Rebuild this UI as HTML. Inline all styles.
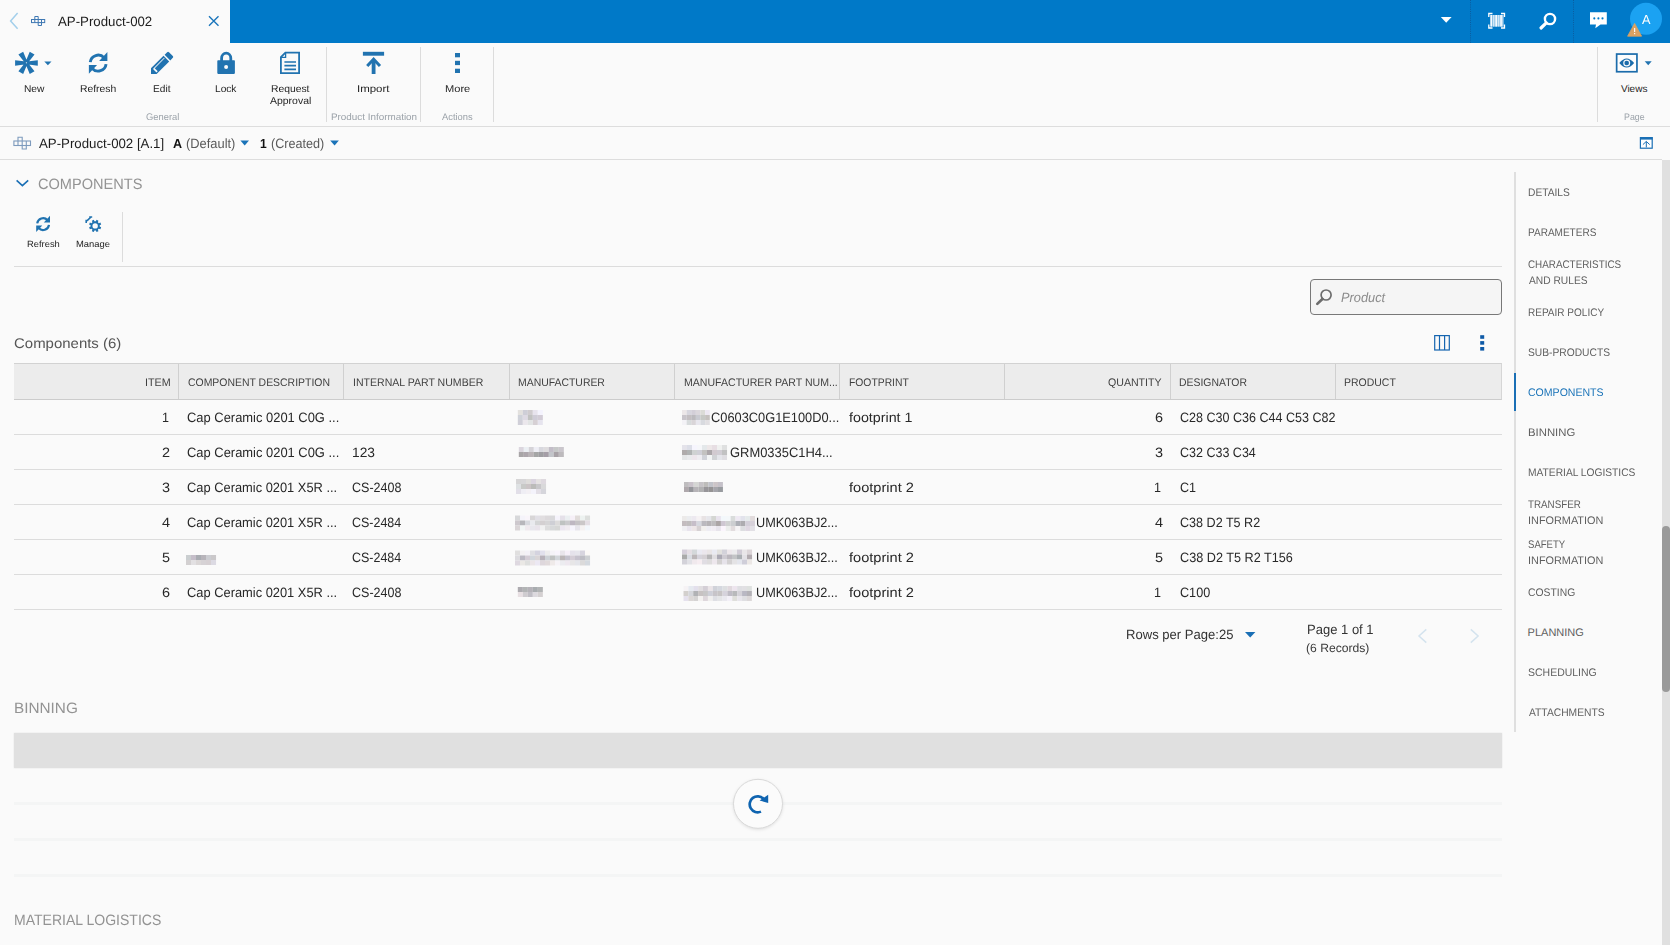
<!DOCTYPE html>
<html><head><meta charset="utf-8"><title>AP-Product-002</title>
<style>
*{box-sizing:border-box;margin:0;padding:0}
html,body{width:1670px;height:945px;overflow:hidden;background:#fafafa;font-family:"Liberation Sans",sans-serif;color:#333}
.abs{position:absolute}
.t{position:absolute;white-space:nowrap;line-height:1;transform-origin:0 0;text-rendering:geometricPrecision}
.hl{position:absolute;height:1px;background:#dcdcdc}
.vl{position:absolute;width:1px;background:#dcdcdc}
svg{position:absolute;overflow:visible}
</style></head><body>
<div class="abs" style="left:230px;top:0;width:1440px;height:43px;background:#0079c8"></div>
<div class="vl" style="left:326px;top:47px;height:75px"></div>
<div class="vl" style="left:420px;top:47px;height:75px"></div>
<div class="vl" style="left:493px;top:47px;height:75px"></div>
<div class="vl" style="left:1597px;top:47px;height:75px"></div>
<div class="hl" style="left:0;top:126px;width:1670px;background:#dddddd"></div>
<div class="hl" style="left:0;top:159px;width:1662px;background:#dddddd"></div>
<div class="vl" style="left:122px;top:212px;height:50px"></div>
<div class="hl" style="left:14px;top:266px;width:1488px"></div>
<div class="abs" style="left:1310px;top:279px;width:192px;height:36px;border:1px solid #787878;border-radius:4px;background:#f5f5f5"></div>
<div class="abs" style="left:14px;top:363px;width:1488px;height:37px;background:#ececec;border-top:1px solid #d2d2d2;border-bottom:1px solid #cccccc;border-right:1px solid #d6d6d6"></div>
<div class="vl" style="left:178px;top:364px;height:35px;background:#d0d0d0"></div>
<div class="vl" style="left:343px;top:364px;height:35px;background:#d0d0d0"></div>
<div class="vl" style="left:509px;top:364px;height:35px;background:#d0d0d0"></div>
<div class="vl" style="left:674px;top:364px;height:35px;background:#d0d0d0"></div>
<div class="vl" style="left:839px;top:364px;height:35px;background:#d0d0d0"></div>
<div class="vl" style="left:1004px;top:364px;height:35px;background:#d0d0d0"></div>
<div class="vl" style="left:1170px;top:364px;height:35px;background:#d0d0d0"></div>
<div class="vl" style="left:1335px;top:364px;height:35px;background:#d0d0d0"></div>
<div class="hl" style="left:14px;top:434px;width:1488px;background:#dcdcdc"></div>
<div class="hl" style="left:14px;top:469px;width:1488px;background:#dcdcdc"></div>
<div class="hl" style="left:14px;top:504px;width:1488px;background:#dcdcdc"></div>
<div class="hl" style="left:14px;top:539px;width:1488px;background:#dcdcdc"></div>
<div class="hl" style="left:14px;top:574px;width:1488px;background:#dcdcdc"></div>
<div class="hl" style="left:14px;top:609px;width:1488px;background:#dcdcdc"></div>
<div class="abs" style="left:14px;top:733px;width:1488px;height:35px;background:#e0e0e0;box-shadow:0 0 1.5px #e0e0e0"></div>
<div class="abs" style="left:14px;top:802px;width:1488px;height:3px;background:#f4f5f5"></div>
<div class="abs" style="left:14px;top:838px;width:1488px;height:3px;background:#f4f5f5"></div>
<div class="abs" style="left:14px;top:874px;width:1488px;height:3px;background:#f4f5f5"></div>
<div class="abs" style="left:1514px;top:172px;width:2px;height:560px;background:#dfdfdf"></div>
<div class="abs" style="left:1514px;top:373px;width:2px;height:38px;background:#1a6fb5"></div>
<div class="abs" style="left:1662px;top:160px;width:8px;height:785px;background:#e0e0e0"></div>
<div class="abs" style="left:1662px;top:525.5px;width:8px;height:166.5px;background:#9a9a9a;border-radius:4px"></div>
<svg style="left:0;top:0;filter:blur(.6px)" width="1670" height="945"><rect x="517.80" y="410.0" width="5.05" height="5" fill="rgb(227,225,222)"/><rect x="522.80" y="410.0" width="5.05" height="5" fill="rgb(206,206,215)"/><rect x="527.80" y="410.0" width="5.05" height="5" fill="rgb(207,203,206)"/><rect x="532.80" y="410.0" width="5.05" height="5" fill="rgb(231,227,237)"/><rect x="537.80" y="410.0" width="5.05" height="5" fill="rgb(244,243,253)"/><rect x="517.80" y="415.0" width="5.05" height="5" fill="rgb(207,210,217)"/><rect x="522.80" y="415.0" width="5.05" height="5" fill="rgb(222,218,228)"/><rect x="527.80" y="415.0" width="5.05" height="5" fill="rgb(193,194,193)"/><rect x="532.80" y="415.0" width="5.05" height="5" fill="rgb(207,204,215)"/><rect x="537.80" y="415.0" width="5.05" height="5" fill="rgb(210,204,214)"/><rect x="517.80" y="420.0" width="5.05" height="5" fill="rgb(208,207,216)"/><rect x="522.80" y="420.0" width="5.05" height="5" fill="rgb(235,231,236)"/><rect x="527.80" y="420.0" width="5.05" height="5" fill="rgb(226,228,228)"/><rect x="532.80" y="420.0" width="5.05" height="5" fill="rgb(214,208,212)"/><rect x="537.80" y="420.0" width="5.05" height="5" fill="rgb(230,228,238)"/><rect x="518.80" y="447.0" width="5.05" height="5" fill="rgb(219,214,222)"/><rect x="523.80" y="447.0" width="5.05" height="5" fill="rgb(235,239,243)"/><rect x="528.80" y="447.0" width="5.05" height="5" fill="rgb(213,211,216)"/><rect x="533.80" y="447.0" width="5.05" height="5" fill="rgb(238,238,245)"/><rect x="538.80" y="447.0" width="5.05" height="5" fill="rgb(216,216,222)"/><rect x="543.80" y="447.0" width="5.05" height="5" fill="rgb(222,220,222)"/><rect x="548.80" y="447.0" width="5.05" height="5" fill="rgb(194,189,199)"/><rect x="553.80" y="447.0" width="5.05" height="5" fill="rgb(198,200,200)"/><rect x="558.80" y="447.0" width="5.05" height="5" fill="rgb(202,198,204)"/><rect x="518.80" y="452.0" width="5.05" height="5" fill="rgb(168,165,167)"/><rect x="523.80" y="452.0" width="5.05" height="5" fill="rgb(173,166,172)"/><rect x="528.80" y="452.0" width="5.05" height="5" fill="rgb(185,179,182)"/><rect x="533.80" y="452.0" width="5.05" height="5" fill="rgb(165,166,166)"/><rect x="538.80" y="452.0" width="5.05" height="5" fill="rgb(159,158,162)"/><rect x="543.80" y="452.0" width="5.05" height="5" fill="rgb(165,158,167)"/><rect x="548.80" y="452.0" width="5.05" height="5" fill="rgb(195,197,202)"/><rect x="553.80" y="452.0" width="5.05" height="5" fill="rgb(168,162,167)"/><rect x="558.80" y="452.0" width="5.05" height="5" fill="rgb(189,186,189)"/><rect x="516.00" y="479.0" width="5.05" height="5" fill="rgb(214,213,214)"/><rect x="521.00" y="479.0" width="5.05" height="5" fill="rgb(215,214,216)"/><rect x="526.00" y="479.0" width="5.05" height="5" fill="rgb(222,220,218)"/><rect x="531.00" y="479.0" width="5.05" height="5" fill="rgb(218,212,223)"/><rect x="536.00" y="479.0" width="5.05" height="5" fill="rgb(229,226,226)"/><rect x="541.00" y="479.0" width="5.05" height="5" fill="rgb(222,217,223)"/><rect x="516.00" y="484.0" width="5.05" height="5" fill="rgb(222,225,227)"/><rect x="521.00" y="484.0" width="5.05" height="5" fill="rgb(200,201,199)"/><rect x="526.00" y="484.0" width="5.05" height="5" fill="rgb(203,196,198)"/><rect x="531.00" y="484.0" width="5.05" height="5" fill="rgb(187,187,185)"/><rect x="536.00" y="484.0" width="5.05" height="5" fill="rgb(200,199,202)"/><rect x="541.00" y="484.0" width="5.05" height="5" fill="rgb(217,217,218)"/><rect x="516.00" y="489.0" width="5.05" height="5" fill="rgb(226,223,232)"/><rect x="521.00" y="489.0" width="5.05" height="5" fill="rgb(239,238,244)"/><rect x="526.00" y="489.0" width="5.05" height="5" fill="rgb(243,240,244)"/><rect x="531.00" y="489.0" width="5.05" height="5" fill="rgb(244,243,251)"/><rect x="536.00" y="489.0" width="5.05" height="5" fill="rgb(227,223,230)"/><rect x="541.00" y="489.0" width="5.05" height="5" fill="rgb(213,213,219)"/><rect x="515.00" y="515.5" width="5.05" height="5" fill="rgb(215,216,218)"/><rect x="520.00" y="515.5" width="5.05" height="5" fill="rgb(245,244,250)"/><rect x="525.00" y="515.5" width="5.05" height="5" fill="rgb(249,245,250)"/><rect x="530.00" y="515.5" width="5.05" height="5" fill="rgb(216,214,215)"/><rect x="535.00" y="515.5" width="5.05" height="5" fill="rgb(225,223,229)"/><rect x="540.00" y="515.5" width="5.05" height="5" fill="rgb(225,222,224)"/><rect x="545.00" y="515.5" width="5.05" height="5" fill="rgb(220,217,219)"/><rect x="550.00" y="515.5" width="5.05" height="5" fill="rgb(217,217,219)"/><rect x="555.00" y="515.5" width="5.05" height="5" fill="rgb(245,243,251)"/><rect x="560.00" y="515.5" width="5.05" height="5" fill="rgb(229,225,233)"/><rect x="565.00" y="515.5" width="5.05" height="5" fill="rgb(235,239,241)"/><rect x="570.00" y="515.5" width="5.05" height="5" fill="rgb(246,240,247)"/><rect x="575.00" y="515.5" width="5.05" height="5" fill="rgb(225,220,218)"/><rect x="580.00" y="515.5" width="5.05" height="5" fill="rgb(237,242,240)"/><rect x="585.00" y="515.5" width="5.05" height="5" fill="rgb(221,223,221)"/><rect x="515.00" y="520.5" width="5.05" height="5" fill="rgb(205,200,205)"/><rect x="520.00" y="520.5" width="5.05" height="5" fill="rgb(183,183,187)"/><rect x="525.00" y="520.5" width="5.05" height="5" fill="rgb(215,217,222)"/><rect x="530.00" y="520.5" width="5.05" height="5" fill="rgb(233,234,238)"/><rect x="535.00" y="520.5" width="5.05" height="5" fill="rgb(212,213,214)"/><rect x="540.00" y="520.5" width="5.05" height="5" fill="rgb(212,208,209)"/><rect x="545.00" y="520.5" width="5.05" height="5" fill="rgb(214,213,214)"/><rect x="550.00" y="520.5" width="5.05" height="5" fill="rgb(206,207,213)"/><rect x="555.00" y="520.5" width="5.05" height="5" fill="rgb(220,219,219)"/><rect x="560.00" y="520.5" width="5.05" height="5" fill="rgb(191,195,193)"/><rect x="565.00" y="520.5" width="5.05" height="5" fill="rgb(202,202,204)"/><rect x="570.00" y="520.5" width="5.05" height="5" fill="rgb(190,183,194)"/><rect x="575.00" y="520.5" width="5.05" height="5" fill="rgb(197,194,198)"/><rect x="580.00" y="520.5" width="5.05" height="5" fill="rgb(203,199,200)"/><rect x="585.00" y="520.5" width="5.05" height="5" fill="rgb(228,222,228)"/><rect x="515.00" y="525.5" width="5.05" height="5" fill="rgb(218,213,215)"/><rect x="520.00" y="525.5" width="5.05" height="5" fill="rgb(242,246,245)"/><rect x="525.00" y="525.5" width="5.05" height="5" fill="rgb(239,234,238)"/><rect x="530.00" y="525.5" width="5.05" height="5" fill="rgb(232,231,237)"/><rect x="535.00" y="525.5" width="5.05" height="5" fill="rgb(233,228,235)"/><rect x="540.00" y="525.5" width="5.05" height="5" fill="rgb(241,241,241)"/><rect x="545.00" y="525.5" width="5.05" height="5" fill="rgb(221,221,221)"/><rect x="550.00" y="525.5" width="5.05" height="5" fill="rgb(215,217,218)"/><rect x="555.00" y="525.5" width="5.05" height="5" fill="rgb(214,215,214)"/><rect x="560.00" y="525.5" width="5.05" height="5" fill="rgb(236,231,240)"/><rect x="565.00" y="525.5" width="5.05" height="5" fill="rgb(240,236,240)"/><rect x="570.00" y="525.5" width="5.05" height="5" fill="rgb(246,244,253)"/><rect x="575.00" y="525.5" width="5.05" height="5" fill="rgb(231,229,236)"/><rect x="580.00" y="525.5" width="5.05" height="5" fill="rgb(245,242,242)"/><rect x="585.00" y="525.5" width="5.05" height="5" fill="rgb(243,247,252)"/><rect x="515.00" y="550.5" width="5.05" height="5" fill="rgb(224,223,223)"/><rect x="520.00" y="550.5" width="5.05" height="5" fill="rgb(244,241,243)"/><rect x="525.00" y="550.5" width="5.05" height="5" fill="rgb(244,241,247)"/><rect x="530.00" y="550.5" width="5.05" height="5" fill="rgb(223,223,227)"/><rect x="535.00" y="550.5" width="5.05" height="5" fill="rgb(212,211,223)"/><rect x="540.00" y="550.5" width="5.05" height="5" fill="rgb(225,224,236)"/><rect x="545.00" y="550.5" width="5.05" height="5" fill="rgb(237,236,237)"/><rect x="550.00" y="550.5" width="5.05" height="5" fill="rgb(245,243,248)"/><rect x="555.00" y="550.5" width="5.05" height="5" fill="rgb(248,244,252)"/><rect x="560.00" y="550.5" width="5.05" height="5" fill="rgb(233,229,235)"/><rect x="565.00" y="550.5" width="5.05" height="5" fill="rgb(246,239,248)"/><rect x="570.00" y="550.5" width="5.05" height="5" fill="rgb(229,226,235)"/><rect x="575.00" y="550.5" width="5.05" height="5" fill="rgb(230,229,236)"/><rect x="580.00" y="550.5" width="5.05" height="5" fill="rgb(215,212,222)"/><rect x="585.00" y="550.5" width="5.05" height="5" fill="rgb(251,248,246)"/><rect x="515.00" y="555.5" width="5.05" height="5" fill="rgb(220,219,223)"/><rect x="520.00" y="555.5" width="5.05" height="5" fill="rgb(188,185,195)"/><rect x="525.00" y="555.5" width="5.05" height="5" fill="rgb(212,204,213)"/><rect x="530.00" y="555.5" width="5.05" height="5" fill="rgb(209,214,220)"/><rect x="535.00" y="555.5" width="5.05" height="5" fill="rgb(217,213,215)"/><rect x="540.00" y="555.5" width="5.05" height="5" fill="rgb(184,178,186)"/><rect x="545.00" y="555.5" width="5.05" height="5" fill="rgb(205,209,214)"/><rect x="550.00" y="555.5" width="5.05" height="5" fill="rgb(192,194,194)"/><rect x="555.00" y="555.5" width="5.05" height="5" fill="rgb(210,213,218)"/><rect x="560.00" y="555.5" width="5.05" height="5" fill="rgb(188,182,183)"/><rect x="565.00" y="555.5" width="5.05" height="5" fill="rgb(196,193,204)"/><rect x="570.00" y="555.5" width="5.05" height="5" fill="rgb(212,205,214)"/><rect x="575.00" y="555.5" width="5.05" height="5" fill="rgb(198,194,205)"/><rect x="580.00" y="555.5" width="5.05" height="5" fill="rgb(190,189,196)"/><rect x="585.00" y="555.5" width="5.05" height="5" fill="rgb(205,207,210)"/><rect x="515.00" y="560.5" width="5.05" height="5" fill="rgb(222,216,224)"/><rect x="520.00" y="560.5" width="5.05" height="5" fill="rgb(234,232,229)"/><rect x="525.00" y="560.5" width="5.05" height="5" fill="rgb(222,223,222)"/><rect x="530.00" y="560.5" width="5.05" height="5" fill="rgb(235,229,232)"/><rect x="535.00" y="560.5" width="5.05" height="5" fill="rgb(236,232,243)"/><rect x="540.00" y="560.5" width="5.05" height="5" fill="rgb(222,215,220)"/><rect x="545.00" y="560.5" width="5.05" height="5" fill="rgb(225,218,219)"/><rect x="550.00" y="560.5" width="5.05" height="5" fill="rgb(239,234,233)"/><rect x="555.00" y="560.5" width="5.05" height="5" fill="rgb(246,243,247)"/><rect x="560.00" y="560.5" width="5.05" height="5" fill="rgb(236,236,240)"/><rect x="565.00" y="560.5" width="5.05" height="5" fill="rgb(238,232,239)"/><rect x="570.00" y="560.5" width="5.05" height="5" fill="rgb(231,230,231)"/><rect x="575.00" y="560.5" width="5.05" height="5" fill="rgb(228,229,234)"/><rect x="580.00" y="560.5" width="5.05" height="5" fill="rgb(219,218,218)"/><rect x="585.00" y="560.5" width="5.05" height="5" fill="rgb(212,217,223)"/><rect x="517.80" y="587.0" width="5.05" height="5" fill="rgb(173,171,176)"/><rect x="522.80" y="587.0" width="5.05" height="5" fill="rgb(178,180,181)"/><rect x="527.80" y="587.0" width="5.05" height="5" fill="rgb(181,178,184)"/><rect x="532.80" y="587.0" width="5.05" height="5" fill="rgb(168,172,175)"/><rect x="537.80" y="587.0" width="5.05" height="5" fill="rgb(178,180,181)"/><rect x="517.80" y="592.0" width="5.05" height="5" fill="rgb(232,224,227)"/><rect x="522.80" y="592.0" width="5.05" height="5" fill="rgb(207,204,208)"/><rect x="527.80" y="592.0" width="5.05" height="5" fill="rgb(192,190,197)"/><rect x="532.80" y="592.0" width="5.05" height="5" fill="rgb(220,217,222)"/><rect x="537.80" y="592.0" width="5.05" height="5" fill="rgb(212,208,209)"/><rect x="682.00" y="410.0" width="4.67" height="5" fill="rgb(236,231,232)"/><rect x="686.62" y="410.0" width="4.67" height="5" fill="rgb(215,214,222)"/><rect x="691.24" y="410.0" width="4.67" height="5" fill="rgb(211,207,216)"/><rect x="695.86" y="410.0" width="4.67" height="5" fill="rgb(219,215,220)"/><rect x="700.48" y="410.0" width="4.67" height="5" fill="rgb(219,219,215)"/><rect x="705.10" y="410.0" width="4.67" height="5" fill="rgb(237,232,243)"/><rect x="682.00" y="415.0" width="4.67" height="5" fill="rgb(201,197,203)"/><rect x="686.62" y="415.0" width="4.67" height="5" fill="rgb(196,191,194)"/><rect x="691.24" y="415.0" width="4.67" height="5" fill="rgb(188,186,190)"/><rect x="695.86" y="415.0" width="4.67" height="5" fill="rgb(201,202,209)"/><rect x="700.48" y="415.0" width="4.67" height="5" fill="rgb(199,201,198)"/><rect x="705.10" y="415.0" width="4.67" height="5" fill="rgb(197,193,191)"/><rect x="682.00" y="420.0" width="4.67" height="5" fill="rgb(243,242,246)"/><rect x="686.62" y="420.0" width="4.67" height="5" fill="rgb(215,219,220)"/><rect x="691.24" y="420.0" width="4.67" height="5" fill="rgb(217,213,216)"/><rect x="695.86" y="420.0" width="4.67" height="5" fill="rgb(232,231,238)"/><rect x="700.48" y="420.0" width="4.67" height="5" fill="rgb(216,218,223)"/><rect x="705.10" y="420.0" width="4.67" height="5" fill="rgb(225,223,226)"/><rect x="682.00" y="445.0" width="5.05" height="5" fill="rgb(228,227,234)"/><rect x="687.00" y="445.0" width="5.05" height="5" fill="rgb(220,222,231)"/><rect x="692.00" y="445.0" width="5.05" height="5" fill="rgb(246,245,253)"/><rect x="697.00" y="445.0" width="5.05" height="5" fill="rgb(246,247,250)"/><rect x="702.00" y="445.0" width="5.05" height="5" fill="rgb(228,232,234)"/><rect x="707.00" y="445.0" width="5.05" height="5" fill="rgb(237,231,232)"/><rect x="712.00" y="445.0" width="5.05" height="5" fill="rgb(231,222,227)"/><rect x="717.00" y="445.0" width="5.05" height="5" fill="rgb(240,241,240)"/><rect x="722.00" y="445.0" width="5.05" height="5" fill="rgb(223,224,224)"/><rect x="682.00" y="450.0" width="5.05" height="5" fill="rgb(175,171,171)"/><rect x="687.00" y="450.0" width="5.05" height="5" fill="rgb(176,179,179)"/><rect x="692.00" y="450.0" width="5.05" height="5" fill="rgb(207,210,210)"/><rect x="697.00" y="450.0" width="5.05" height="5" fill="rgb(208,208,215)"/><rect x="702.00" y="450.0" width="5.05" height="5" fill="rgb(195,194,192)"/><rect x="707.00" y="450.0" width="5.05" height="5" fill="rgb(172,167,170)"/><rect x="712.00" y="450.0" width="5.05" height="5" fill="rgb(210,202,208)"/><rect x="717.00" y="450.0" width="5.05" height="5" fill="rgb(209,205,212)"/><rect x="722.00" y="450.0" width="5.05" height="5" fill="rgb(193,193,194)"/><rect x="682.00" y="455.0" width="5.05" height="5" fill="rgb(228,230,231)"/><rect x="687.00" y="455.0" width="5.05" height="5" fill="rgb(233,234,236)"/><rect x="692.00" y="455.0" width="5.05" height="5" fill="rgb(237,230,236)"/><rect x="697.00" y="455.0" width="5.05" height="5" fill="rgb(238,237,241)"/><rect x="702.00" y="455.0" width="5.05" height="5" fill="rgb(209,211,217)"/><rect x="707.00" y="455.0" width="5.05" height="5" fill="rgb(243,245,245)"/><rect x="712.00" y="455.0" width="5.05" height="5" fill="rgb(209,211,214)"/><rect x="717.00" y="455.0" width="5.05" height="5" fill="rgb(228,229,234)"/><rect x="722.00" y="455.0" width="5.05" height="5" fill="rgb(223,221,226)"/><rect x="684.00" y="482.0" width="4.91" height="5" fill="rgb(191,189,191)"/><rect x="688.86" y="482.0" width="4.91" height="5" fill="rgb(201,194,202)"/><rect x="693.72" y="482.0" width="4.91" height="5" fill="rgb(213,214,212)"/><rect x="698.58" y="482.0" width="4.91" height="5" fill="rgb(198,195,199)"/><rect x="703.44" y="482.0" width="4.91" height="5" fill="rgb(189,188,186)"/><rect x="708.30" y="482.0" width="4.91" height="5" fill="rgb(193,195,202)"/><rect x="713.16" y="482.0" width="4.91" height="5" fill="rgb(204,197,200)"/><rect x="718.02" y="482.0" width="4.91" height="5" fill="rgb(197,193,201)"/><rect x="684.00" y="487.0" width="4.91" height="5" fill="rgb(175,168,172)"/><rect x="688.86" y="487.0" width="4.91" height="5" fill="rgb(148,149,154)"/><rect x="693.72" y="487.0" width="4.91" height="5" fill="rgb(183,180,184)"/><rect x="698.58" y="487.0" width="4.91" height="5" fill="rgb(177,177,178)"/><rect x="703.44" y="487.0" width="4.91" height="5" fill="rgb(151,149,153)"/><rect x="708.30" y="487.0" width="4.91" height="5" fill="rgb(149,147,148)"/><rect x="713.16" y="487.0" width="4.91" height="5" fill="rgb(165,165,171)"/><rect x="718.02" y="487.0" width="4.91" height="5" fill="rgb(152,155,159)"/><rect x="682.00" y="516.0" width="4.91" height="5" fill="rgb(236,234,233)"/><rect x="686.86" y="516.0" width="4.91" height="5" fill="rgb(235,236,239)"/><rect x="691.72" y="516.0" width="4.91" height="5" fill="rgb(237,233,240)"/><rect x="696.58" y="516.0" width="4.91" height="5" fill="rgb(246,242,244)"/><rect x="701.44" y="516.0" width="4.91" height="5" fill="rgb(232,227,228)"/><rect x="706.30" y="516.0" width="4.91" height="5" fill="rgb(230,230,235)"/><rect x="711.16" y="516.0" width="4.91" height="5" fill="rgb(212,214,210)"/><rect x="716.02" y="516.0" width="4.91" height="5" fill="rgb(232,227,237)"/><rect x="720.88" y="516.0" width="4.91" height="5" fill="rgb(243,248,251)"/><rect x="725.74" y="516.0" width="4.91" height="5" fill="rgb(244,248,250)"/><rect x="730.60" y="516.0" width="4.91" height="5" fill="rgb(217,220,219)"/><rect x="735.46" y="516.0" width="4.91" height="5" fill="rgb(238,233,243)"/><rect x="740.32" y="516.0" width="4.91" height="5" fill="rgb(226,227,236)"/><rect x="745.18" y="516.0" width="4.91" height="5" fill="rgb(229,234,235)"/><rect x="750.04" y="516.0" width="4.91" height="5" fill="rgb(225,219,220)"/><rect x="682.00" y="521.0" width="4.91" height="5" fill="rgb(195,188,191)"/><rect x="686.86" y="521.0" width="4.91" height="5" fill="rgb(192,189,190)"/><rect x="691.72" y="521.0" width="4.91" height="5" fill="rgb(198,190,201)"/><rect x="696.58" y="521.0" width="4.91" height="5" fill="rgb(214,216,223)"/><rect x="701.44" y="521.0" width="4.91" height="5" fill="rgb(187,185,191)"/><rect x="706.30" y="521.0" width="4.91" height="5" fill="rgb(182,179,182)"/><rect x="711.16" y="521.0" width="4.91" height="5" fill="rgb(189,187,189)"/><rect x="716.02" y="521.0" width="4.91" height="5" fill="rgb(171,165,165)"/><rect x="720.88" y="521.0" width="4.91" height="5" fill="rgb(206,199,210)"/><rect x="725.74" y="521.0" width="4.91" height="5" fill="rgb(208,210,210)"/><rect x="730.60" y="521.0" width="4.91" height="5" fill="rgb(204,206,209)"/><rect x="735.46" y="521.0" width="4.91" height="5" fill="rgb(173,175,182)"/><rect x="740.32" y="521.0" width="4.91" height="5" fill="rgb(173,172,176)"/><rect x="745.18" y="521.0" width="4.91" height="5" fill="rgb(211,207,217)"/><rect x="750.04" y="521.0" width="4.91" height="5" fill="rgb(215,209,217)"/><rect x="682.00" y="526.0" width="4.91" height="5" fill="rgb(240,240,243)"/><rect x="686.86" y="526.0" width="4.91" height="5" fill="rgb(232,228,237)"/><rect x="691.72" y="526.0" width="4.91" height="5" fill="rgb(237,230,231)"/><rect x="696.58" y="526.0" width="4.91" height="5" fill="rgb(214,209,211)"/><rect x="701.44" y="526.0" width="4.91" height="5" fill="rgb(242,240,238)"/><rect x="706.30" y="526.0" width="4.91" height="5" fill="rgb(238,237,243)"/><rect x="711.16" y="526.0" width="4.91" height="5" fill="rgb(241,237,243)"/><rect x="716.02" y="526.0" width="4.91" height="5" fill="rgb(231,228,235)"/><rect x="720.88" y="526.0" width="4.91" height="5" fill="rgb(251,245,253)"/><rect x="725.74" y="526.0" width="4.91" height="5" fill="rgb(236,238,237)"/><rect x="730.60" y="526.0" width="4.91" height="5" fill="rgb(226,220,222)"/><rect x="735.46" y="526.0" width="4.91" height="5" fill="rgb(246,244,246)"/><rect x="740.32" y="526.0" width="4.91" height="5" fill="rgb(221,222,225)"/><rect x="745.18" y="526.0" width="4.91" height="5" fill="rgb(223,216,226)"/><rect x="750.04" y="526.0" width="4.91" height="5" fill="rgb(226,224,229)"/><rect x="682.00" y="549.5" width="5.05" height="5" fill="rgb(213,207,218)"/><rect x="687.00" y="549.5" width="5.05" height="5" fill="rgb(228,222,227)"/><rect x="692.00" y="549.5" width="5.05" height="5" fill="rgb(212,216,218)"/><rect x="697.00" y="549.5" width="5.05" height="5" fill="rgb(234,234,242)"/><rect x="702.00" y="549.5" width="5.05" height="5" fill="rgb(235,231,237)"/><rect x="707.00" y="549.5" width="5.05" height="5" fill="rgb(233,229,230)"/><rect x="712.00" y="549.5" width="5.05" height="5" fill="rgb(233,234,242)"/><rect x="717.00" y="549.5" width="5.05" height="5" fill="rgb(226,225,222)"/><rect x="722.00" y="549.5" width="5.05" height="5" fill="rgb(211,210,218)"/><rect x="727.00" y="549.5" width="5.05" height="5" fill="rgb(237,231,235)"/><rect x="732.00" y="549.5" width="5.05" height="5" fill="rgb(236,235,237)"/><rect x="737.00" y="549.5" width="5.05" height="5" fill="rgb(209,204,214)"/><rect x="742.00" y="549.5" width="5.05" height="5" fill="rgb(233,230,232)"/><rect x="747.00" y="549.5" width="5.05" height="5" fill="rgb(220,213,216)"/><rect x="682.00" y="554.5" width="5.05" height="5" fill="rgb(170,171,170)"/><rect x="687.00" y="554.5" width="5.05" height="5" fill="rgb(217,220,226)"/><rect x="692.00" y="554.5" width="5.05" height="5" fill="rgb(188,183,185)"/><rect x="697.00" y="554.5" width="5.05" height="5" fill="rgb(213,211,219)"/><rect x="702.00" y="554.5" width="5.05" height="5" fill="rgb(212,208,212)"/><rect x="707.00" y="554.5" width="5.05" height="5" fill="rgb(182,181,183)"/><rect x="712.00" y="554.5" width="5.05" height="5" fill="rgb(223,221,224)"/><rect x="717.00" y="554.5" width="5.05" height="5" fill="rgb(171,169,180)"/><rect x="722.00" y="554.5" width="5.05" height="5" fill="rgb(205,202,209)"/><rect x="727.00" y="554.5" width="5.05" height="5" fill="rgb(187,183,190)"/><rect x="732.00" y="554.5" width="5.05" height="5" fill="rgb(195,196,198)"/><rect x="737.00" y="554.5" width="5.05" height="5" fill="rgb(171,175,179)"/><rect x="742.00" y="554.5" width="5.05" height="5" fill="rgb(227,225,229)"/><rect x="747.00" y="554.5" width="5.05" height="5" fill="rgb(179,172,176)"/><rect x="682.00" y="559.5" width="5.05" height="5" fill="rgb(211,210,217)"/><rect x="687.00" y="559.5" width="5.05" height="5" fill="rgb(225,225,230)"/><rect x="692.00" y="559.5" width="5.05" height="5" fill="rgb(240,233,237)"/><rect x="697.00" y="559.5" width="5.05" height="5" fill="rgb(246,237,241)"/><rect x="702.00" y="559.5" width="5.05" height="5" fill="rgb(224,221,227)"/><rect x="707.00" y="559.5" width="5.05" height="5" fill="rgb(222,220,221)"/><rect x="712.00" y="559.5" width="5.05" height="5" fill="rgb(237,231,237)"/><rect x="717.00" y="559.5" width="5.05" height="5" fill="rgb(211,209,209)"/><rect x="722.00" y="559.5" width="5.05" height="5" fill="rgb(230,227,234)"/><rect x="727.00" y="559.5" width="5.05" height="5" fill="rgb(211,209,210)"/><rect x="732.00" y="559.5" width="5.05" height="5" fill="rgb(228,227,229)"/><rect x="737.00" y="559.5" width="5.05" height="5" fill="rgb(228,230,237)"/><rect x="742.00" y="559.5" width="5.05" height="5" fill="rgb(207,206,217)"/><rect x="747.00" y="559.5" width="5.05" height="5" fill="rgb(236,232,230)"/><rect x="683.50" y="586.0" width="4.93" height="5" fill="rgb(246,243,245)"/><rect x="688.38" y="586.0" width="4.93" height="5" fill="rgb(230,234,240)"/><rect x="693.26" y="586.0" width="4.93" height="5" fill="rgb(227,224,236)"/><rect x="698.14" y="586.0" width="4.93" height="5" fill="rgb(225,222,225)"/><rect x="703.02" y="586.0" width="4.93" height="5" fill="rgb(212,207,214)"/><rect x="707.90" y="586.0" width="4.93" height="5" fill="rgb(235,229,232)"/><rect x="712.78" y="586.0" width="4.93" height="5" fill="rgb(208,210,217)"/><rect x="717.66" y="586.0" width="4.93" height="5" fill="rgb(213,216,223)"/><rect x="722.54" y="586.0" width="4.93" height="5" fill="rgb(221,223,225)"/><rect x="727.42" y="586.0" width="4.93" height="5" fill="rgb(225,217,222)"/><rect x="732.30" y="586.0" width="4.93" height="5" fill="rgb(237,229,238)"/><rect x="737.18" y="586.0" width="4.93" height="5" fill="rgb(223,223,227)"/><rect x="742.06" y="586.0" width="4.93" height="5" fill="rgb(225,224,227)"/><rect x="746.94" y="586.0" width="4.93" height="5" fill="rgb(222,225,223)"/><rect x="683.50" y="591.0" width="4.93" height="5" fill="rgb(211,208,205)"/><rect x="688.38" y="591.0" width="4.93" height="5" fill="rgb(213,214,219)"/><rect x="693.26" y="591.0" width="4.93" height="5" fill="rgb(177,178,181)"/><rect x="698.14" y="591.0" width="4.93" height="5" fill="rgb(199,194,194)"/><rect x="703.02" y="591.0" width="4.93" height="5" fill="rgb(199,198,199)"/><rect x="707.90" y="591.0" width="4.93" height="5" fill="rgb(206,207,216)"/><rect x="712.78" y="591.0" width="4.93" height="5" fill="rgb(199,196,201)"/><rect x="717.66" y="591.0" width="4.93" height="5" fill="rgb(199,196,197)"/><rect x="722.54" y="591.0" width="4.93" height="5" fill="rgb(214,211,220)"/><rect x="727.42" y="591.0" width="4.93" height="5" fill="rgb(191,188,197)"/><rect x="732.30" y="591.0" width="4.93" height="5" fill="rgb(184,185,187)"/><rect x="737.18" y="591.0" width="4.93" height="5" fill="rgb(212,210,216)"/><rect x="742.06" y="591.0" width="4.93" height="5" fill="rgb(185,184,195)"/><rect x="746.94" y="591.0" width="4.93" height="5" fill="rgb(180,178,183)"/><rect x="683.50" y="596.0" width="4.93" height="5" fill="rgb(229,225,237)"/><rect x="688.38" y="596.0" width="4.93" height="5" fill="rgb(219,215,214)"/><rect x="693.26" y="596.0" width="4.93" height="5" fill="rgb(213,211,211)"/><rect x="698.14" y="596.0" width="4.93" height="5" fill="rgb(243,241,240)"/><rect x="703.02" y="596.0" width="4.93" height="5" fill="rgb(222,215,220)"/><rect x="707.90" y="596.0" width="4.93" height="5" fill="rgb(240,239,238)"/><rect x="712.78" y="596.0" width="4.93" height="5" fill="rgb(222,223,228)"/><rect x="717.66" y="596.0" width="4.93" height="5" fill="rgb(228,229,231)"/><rect x="722.54" y="596.0" width="4.93" height="5" fill="rgb(234,233,239)"/><rect x="727.42" y="596.0" width="4.93" height="5" fill="rgb(243,240,248)"/><rect x="732.30" y="596.0" width="4.93" height="5" fill="rgb(223,223,219)"/><rect x="737.18" y="596.0" width="4.93" height="5" fill="rgb(232,230,236)"/><rect x="742.06" y="596.0" width="4.93" height="5" fill="rgb(223,223,226)"/><rect x="746.94" y="596.0" width="4.93" height="5" fill="rgb(220,216,217)"/><rect x="186.00" y="555.0" width="5.05" height="5" fill="rgb(202,206,208)"/><rect x="191.00" y="555.0" width="5.05" height="5" fill="rgb(197,190,201)"/><rect x="196.00" y="555.0" width="5.05" height="5" fill="rgb(169,172,178)"/><rect x="201.00" y="555.0" width="5.05" height="5" fill="rgb(183,180,186)"/><rect x="206.00" y="555.0" width="5.05" height="5" fill="rgb(203,204,209)"/><rect x="211.00" y="555.0" width="5.05" height="5" fill="rgb(202,200,202)"/><rect x="186.00" y="560.0" width="5.05" height="5" fill="rgb(211,208,209)"/><rect x="191.00" y="560.0" width="5.05" height="5" fill="rgb(226,224,226)"/><rect x="196.00" y="560.0" width="5.05" height="5" fill="rgb(219,215,215)"/><rect x="201.00" y="560.0" width="5.05" height="5" fill="rgb(214,210,213)"/><rect x="206.00" y="560.0" width="5.05" height="5" fill="rgb(214,208,211)"/><rect x="211.00" y="560.0" width="5.05" height="5" fill="rgb(220,218,227)"/></svg>
<svg style="left:0;top:0" width="1670" height="945"><path d="M17.6,13 L10.6,20.9 L17.6,28.8" fill="none" stroke="#a3cfeb" stroke-width="1.5"/>
<g fill="none" stroke="#3f78b3" stroke-width="1.0" stroke-linejoin="miter"><rect x="31.5" y="19.5" width="13.20" height="3.10"/><path d="M34.8,22.6 V16.5 H38.2 V25.5 H41.5 V19.5"/></g>
<path d="M209,16.3 L218.5,25.8 M218.5,16.3 L209,25.8" stroke="#1a75bb" stroke-width="1.4" fill="none"/>
<path d="M26.95,64.20 L37.80,65.65 L37.80,60.15 L26.95,61.60Z M25.57,63.98 L29.74,74.10 L34.51,71.35 L27.83,62.68Z M25.07,62.68 L18.39,71.35 L23.16,74.10 L27.33,63.98Z M25.95,61.60 L15.10,60.15 L15.10,65.65 L25.95,64.20Z M27.33,61.82 L23.16,51.70 L18.39,54.45 L25.07,63.12Z M27.83,63.12 L34.51,54.45 L29.74,51.70 L25.57,61.82Z " fill="#2173b0"/>
<path d="M44.3,61.4 H51.5 L47.9,65.3Z" fill="#2173b0"/>
<path d="M90.26,62.13 A7.95,7.95 0 0 1 104.06,57.78" fill="none" stroke="#2173b0" stroke-width="2.9" stroke-linecap="butt"/><path d="M106.04,64.07 A7.95,7.95 0 0 1 92.24,68.42" fill="none" stroke="#2173b0" stroke-width="2.9" stroke-linecap="butt"/><path d="M107.40,52.00 L107.40,61.00 L99.15,61.00Z" fill="#2173b0"/><path d="M88.90,73.80 L88.90,65.00 L97.05,65.00Z" fill="#2173b0"/>
<g transform="translate(162,63) rotate(-45)"><path d="M-15.6,0 L-11.6,-4.0 H6.15 V4.0 H-11.6Z" fill="#2173b0"/><path d="M7.7,-4.0 H11.3 Q12.6,-4.0 12.6,-2.7 V2.7 Q12.6,4.0 11.3,4.0 H7.7Z" fill="#2173b0"/><rect x="-10.6" y="-2.3" width="1.8" height="5.2" rx="0.8" fill="#fafafa"/><rect x="-9.4" y="-2.3" width="14.6" height="0.9" fill="#fafafa" opacity=".9"/></g>
<rect x="217.3" y="60.2" width="17.6" height="13.7" rx="0.8" fill="#2173b0"/><path d="M221.6,61 V58.2 A4.6,5.0 0 0 1 230.8,58.2 V61" fill="none" stroke="#2173b0" stroke-width="2.8"/><circle cx="226.1" cy="67" r="2.0" fill="#fafafa"/>
<path d="M285.4,52.7 H299.1 V73.1 H280.9 V57.2 Z" fill="none" stroke="#2173b0" stroke-width="1.8" stroke-linejoin="miter"/><path d="M285.6,52.9 V57.4 H281.1" fill="none" stroke="#2173b0" stroke-width="1.3"/><path d="M284.4,62 H296 M284.4,65.7 H296 M284.4,69.3 H296" stroke="#2173b0" stroke-width="1.7"/>
<rect x="362.9" y="51.8" width="21.2" height="3.9" fill="#2173b0"/><path d="M373.6,74 V60" stroke="#2173b0" stroke-width="3.8"/><path d="M367.2,66 L373.6,59.2 L380,66" fill="none" stroke="#2173b0" stroke-width="3" stroke-linejoin="miter"/>
<rect x="455" y="53" width="5" height="4.3" fill="#2173b0"/><rect x="455" y="60.8" width="5" height="4.3" fill="#2173b0"/><rect x="455" y="68.7" width="5" height="4.3" fill="#2173b0"/>
<rect x="1616.65" y="54.05" width="20.3" height="17.7" fill="#fdfdfd" stroke="#1b6cab" stroke-width="1.7"/><path d="M1619.3,63 Q1626.7,53.8 1634.1,63 Q1626.7,72.2 1619.3,63Z" fill="#1b6cab"/><circle cx="1626.7" cy="63" r="2.9" fill="#1b6cab" stroke="#f4f8fb" stroke-width="1.2"/><path d="M1644.7,61.3 H1651.7 L1648.2,65.3Z" fill="#2173b0"/>
<path d="M1440.8,17 H1451.6 L1446.2,22.8Z" fill="#fff"/><path d="M1470.5,0 V43" stroke="#0b5c9e" stroke-width="1" stroke-dasharray="1,1.2"/><path d="M1573.5,0 V43" stroke="#0b5c9e" stroke-width="1" stroke-dasharray="1,1.2"/><path d="M1488.8,17 V13.5 H1492.5 M1501,13.5 H1504.5 V17 M1504.5,24.5 V28 H1501 M1492.5,28 H1488.8 V24.5" fill="none" stroke="#fff" stroke-width="1.3"/><rect x="1490.3" y="15" width="12.9" height="11.6" fill="#cfe6f6" opacity=".55"/><rect x="1490.4" y="15" width="1.8" height="11.6" fill="#fff" opacity="0.95"/><rect x="1493.2" y="15" width="1.2" height="11.6" fill="#fff" opacity="0.85"/><rect x="1495.3" y="15" width="2.0" height="11.6" fill="#fff" opacity="0.95"/><rect x="1498.2" y="15" width="1.2" height="11.6" fill="#fff" opacity="0.85"/><rect x="1500.2" y="15" width="1.7" height="11.6" fill="#fff" opacity="0.95"/><rect x="1502.5" y="15" width="0.9" height="11.6" fill="#fff" opacity="0.85"/><circle cx="1550" cy="19" r="5.1" fill="none" stroke="#fff" stroke-width="2.4"/><path d="M1546.3,22.9 L1541,28" stroke="#fff" stroke-width="3.2" stroke-linecap="round"/><path d="M1590,12.2 H1606.8 V24.4 H1600.5 L1595.3,28.2 L1596,24.4 H1590Z" fill="#fff"/><circle cx="1594.3" cy="18.4" r="1.05" fill="#0079c8"/><circle cx="1598.4" cy="18.4" r="1.05" fill="#0079c8"/><circle cx="1602.5" cy="18.4" r="1.05" fill="#0079c8"/><circle cx="1646" cy="18.7" r="16" fill="#1ba2f2"/><path d="M1634.6,23.4 L1641.6,36.2 H1627.6Z" fill="#dca262" stroke="#dca262" stroke-width="0.8" stroke-linejoin="round"/><rect x="1634.1" y="28" width="1.1" height="4" fill="#fff"/><rect x="1634.1" y="33" width="1.1" height="1.2" fill="#fff"/>
<g fill="none" stroke="#7e9bbd" stroke-width="1.1" stroke-linejoin="miter"><rect x="13.9" y="141" width="16.60" height="4.50"/><path d="M18.0,145.5 V137.3 H22.2 V149 H26.3 V141"/></g>
<path d="M240.4,140.5 H249 L244.7,145.4Z" fill="#1a73b8"/><path d="M330.2,140.5 H338.9 L334.55,145.4Z" fill="#1a73b8"/>
<rect x="1640.4" y="137.6" width="11.8" height="10.6" fill="#fff" stroke="#1a6fb5" stroke-width="1.2"/><rect x="1640" y="137.2" width="12.6" height="2.4" fill="#1a6fb5"/><path d="M1646.3,141.6 V147.4 M1642.9,144.6 L1646.3,141.4 L1649.7,144.6" fill="none" stroke="#1a6fb5" stroke-width="1"/>
<path d="M16.6,180.3 L22.4,185.6 L28.2,180.3" fill="none" stroke="#1a6fb5" stroke-width="1.6"/>
<path d="M37.22,223.38 A5.92275,5.92275 0 0 1 47.50,220.14" fill="none" stroke="#2173b0" stroke-width="2.1605" stroke-linecap="butt"/><path d="M48.98,224.82 A5.92275,5.92275 0 0 1 38.70,228.06" fill="none" stroke="#2173b0" stroke-width="2.1605" stroke-linecap="butt"/><path d="M49.99,215.83 L49.99,222.54 L43.84,222.54Z" fill="#2173b0"/><path d="M36.21,232.07 L36.21,225.52 L42.28,225.52Z" fill="#2173b0"/>
<path d="M99.69,226.58 L101.19,227.30 L100.41,229.18 L98.84,228.63 L97.88,229.59 L98.43,231.16 L96.55,231.94 L95.83,230.44 L94.47,230.44 L93.75,231.94 L91.87,231.16 L92.42,229.59 L91.46,228.63 L89.89,229.18 L89.11,227.30 L90.61,226.58 L90.61,225.22 L89.11,224.50 L89.89,222.62 L91.46,223.17 L92.42,222.21 L91.87,220.64 L93.75,219.86 L94.47,221.36 L95.83,221.36 L96.55,219.86 L98.43,220.64 L97.88,222.21 L98.84,223.17 L100.41,222.62 L101.19,224.50 L99.69,225.22Z M97.85,225.90 A2.7,2.7 0 1 0 92.45,225.90 A2.7,2.7 0 1 0 97.85,225.90Z" fill="#2173b0" fill-rule="evenodd"/>
<path d="M89.2,217 H92.2 M91,217 L86.9,220.9 M86.2,219.8 V222.9" fill="none" stroke="#2173b0" stroke-width="1.6"/>
<circle cx="1326.1" cy="295" r="5" fill="none" stroke="#6d6d6d" stroke-width="1.7"/><path d="M1322.4,299 L1317.3,303.9" stroke="#6d6d6d" stroke-width="2.7" stroke-linecap="round"/>
<rect x="1434.7" y="335.6" width="14.6" height="14.4" fill="none" stroke="#1565b0" stroke-width="1.2"/><path d="M1439.5,335.6 V350 M1444.6,335.6 V350" stroke="#1565b0" stroke-width="1.2"/>
<rect x="1480.2" y="335.2" width="4" height="3.6" fill="#0e5aa7"/><rect x="1480.2" y="341.1" width="4" height="3.6" fill="#0e5aa7"/><rect x="1480.2" y="347" width="4" height="3.6" fill="#0e5aa7"/>
<path d="M1245,632 H1255.4 L1250.2,637.5Z" fill="#1a6fb5"/>
<path d="M1426.3,629.4 L1419,636 L1426.3,642.6" fill="none" stroke="#d4e3ee" stroke-width="1.5"/><path d="M1470.8,629.4 L1478.1,636 L1470.8,642.6" fill="none" stroke="#d4e3ee" stroke-width="1.5"/>
<circle cx="758" cy="803.8" r="24.5" fill="#fbfbfb" stroke="#d8d8d8" stroke-width="1" style="filter:drop-shadow(0 1px 1.5px rgba(0,0,0,.10))"/>
<path d="M760.95,811.61 A8.0,8.0 0 1 1 763.45,798.74" fill="none" stroke="#0f64b0" stroke-width="2.7" stroke-linecap="butt"/>
<path d="M768.2,794.7 V803 L759.6,800.6Z" fill="#0f64b0"/></svg>
<div class="t" style="left:58.30px;top:15px;font-size:13.5px;color:#1d1d1d;transform:scaleX(0.9811)">AP-Product-002</div>
<div class="t" style="left:23.58px;top:85px;font-size:10px;color:#1e1e1e;transform:scaleX(1.0208)">New</div>
<div class="t" style="left:79.97px;top:85px;font-size:10px;color:#1e1e1e;transform:scaleX(1.0357)">Refresh</div>
<div class="t" style="left:153.19px;top:85px;font-size:10px;color:#1e1e1e;transform:scaleX(1.0122)">Edit</div>
<div class="t" style="left:214.99px;top:85px;font-size:10px;color:#1e1e1e;transform:scaleX(1.0148)">Lock</div>
<div class="t" style="left:270.67px;top:85px;font-size:10px;color:#1e1e1e;transform:scaleX(1.0330)">Request</div>
<div class="t" style="left:269.70px;top:97px;font-size:10px;color:#1e1e1e;transform:scaleX(1.0464)">Approval</div>
<div class="t" style="left:356.97px;top:85px;font-size:10px;color:#1e1e1e;transform:scaleX(1.1460)">Import</div>
<div class="t" style="left:444.51px;top:85px;font-size:10px;color:#1e1e1e;transform:scaleX(1.1070)">More</div>
<div class="t" style="left:1620.90px;top:85px;font-size:10px;color:#1e1e1e;transform:scaleX(1.0000)">Views</div>
<div class="t" style="left:145.51px;top:113px;font-size:9.5px;color:#9ba2a9;transform:scaleX(0.9847)">General</div>
<div class="t" style="left:330.67px;top:113px;font-size:9.5px;color:#9ba2a9;transform:scaleX(1.0380)">Product Information</div>
<div class="t" style="left:442.10px;top:113px;font-size:9.5px;color:#9ba2a9;transform:scaleX(0.9838)">Actions</div>
<div class="t" style="left:1623.56px;top:113px;font-size:9.5px;color:#9ba2a9;transform:scaleX(0.9286)">Page</div>
<div class="t" style="left:38.50px;top:137px;font-size:13.5px;color:#1d1d1d;transform:scaleX(0.9810)">AP-Product-002 [A.1]</div>
<div class="t" style="left:172.91px;top:137px;font-size:13px;color:#111;transform:scaleX(0.9655);font-weight:bold">A</div>
<div class="t" style="left:185.84px;top:137px;font-size:13.5px;color:#5a5a5a;transform:scaleX(0.9541)">(Default)</div>
<div class="t" style="left:259.86px;top:137px;font-size:13px;color:#111;transform:scaleX(0.9300);font-weight:bold">1</div>
<div class="t" style="left:271.35px;top:137px;font-size:13.5px;color:#5a5a5a;transform:scaleX(0.9350)">(Created)</div>
<div class="t" style="left:37.82px;top:177px;font-size:15px;color:#939393;transform:scaleX(0.9717)">COMPONENTS</div>
<div class="t" style="left:26.67px;top:240px;font-size:9px;color:#1e1e1e;transform:scaleX(1.0397)">Refresh</div>
<div class="t" style="left:75.97px;top:240px;font-size:9px;color:#1e1e1e;transform:scaleX(1.0446)">Manage</div>
<div class="t" style="left:1341.22px;top:291px;font-size:13.5px;color:#8c8c8c;transform:scaleX(0.9485);font-style:italic">Product</div>
<div class="t" style="left:13.85px;top:336px;font-size:14px;color:#555;transform:scaleX(1.0688)">Components (6)</div>
<div class="t" style="left:144.62px;top:378px;font-size:11px;color:#3f3f3f;transform:scaleX(0.9754)">ITEM</div>
<div class="t" style="left:188.13px;top:378px;font-size:11px;color:#3f3f3f;transform:scaleX(0.9493)">COMPONENT DESCRIPTION</div>
<div class="t" style="left:352.84px;top:378px;font-size:11px;color:#3f3f3f;transform:scaleX(0.9590)">INTERNAL PART NUMBER</div>
<div class="t" style="left:518.45px;top:378px;font-size:11px;color:#3f3f3f;transform:scaleX(0.9479)">MANUFACTURER</div>
<div class="t" style="left:683.54px;top:378px;font-size:11px;color:#3f3f3f;transform:scaleX(0.9602)">MANUFACTURER PART NUM...</div>
<div class="t" style="left:848.75px;top:378px;font-size:11px;color:#3f3f3f;transform:scaleX(0.9407)">FOOTPRINT</div>
<div class="t" style="left:1108.12px;top:378px;font-size:11px;color:#3f3f3f;transform:scaleX(0.9635)">QUANTITY</div>
<div class="t" style="left:1179.15px;top:378px;font-size:11px;color:#3f3f3f;transform:scaleX(0.9474)">DESIGNATOR</div>
<div class="t" style="left:1344.44px;top:378px;font-size:11px;color:#3f3f3f;transform:scaleX(0.9530)">PRODUCT</div>
<div class="t" style="left:162.48px;top:411px;font-size:13.5px;color:#282828;transform:scaleX(0.9300)">1</div>
<div class="t" style="left:187.23px;top:411px;font-size:13.5px;color:#282828;transform:scaleX(0.9574)">Cap Ceramic 0201 C0G ...</div>
<div class="t" style="left:711.14px;top:411px;font-size:13.5px;color:#282828;transform:scaleX(0.9497)">C0603C0G1E100D0...</div>
<div class="t" style="left:848.79px;top:411px;font-size:13.5px;color:#282828;transform:scaleX(1.0574)">footprint 1</div>
<div class="t" style="left:1154.72px;top:411px;font-size:13.5px;color:#282828;transform:scaleX(1.0700)">6</div>
<div class="t" style="left:1179.75px;top:411px;font-size:13.5px;color:#282828;transform:scaleX(0.9289)">C28 C30 C36 C44 C53 C82</div>
<div class="t" style="left:162.32px;top:446px;font-size:13.5px;color:#282828;transform:scaleX(1.0700)">2</div>
<div class="t" style="left:187.23px;top:446px;font-size:13.5px;color:#282828;transform:scaleX(0.9574)">Cap Ceramic 0201 C0G ...</div>
<div class="t" style="left:352.08px;top:446px;font-size:13.5px;color:#282828;transform:scaleX(1.0191)">123</div>
<div class="t" style="left:730.43px;top:446px;font-size:13.5px;color:#282828;transform:scaleX(0.9573)">GRM0335C1H4...</div>
<div class="t" style="left:1154.62px;top:446px;font-size:13.5px;color:#282828;transform:scaleX(1.0700)">3</div>
<div class="t" style="left:1179.75px;top:446px;font-size:13.5px;color:#282828;transform:scaleX(0.9269)">C32 C33 C34</div>
<div class="t" style="left:162.02px;top:481px;font-size:13.5px;color:#282828;transform:scaleX(1.0700)">3</div>
<div class="t" style="left:187.23px;top:481px;font-size:13.5px;color:#282828;transform:scaleX(0.9531)">Cap Ceramic 0201 X5R ...</div>
<div class="t" style="left:352.45px;top:481px;font-size:13.5px;color:#282828;transform:scaleX(0.9269)">CS-2408</div>
<div class="t" style="left:848.78px;top:481px;font-size:13.5px;color:#282828;transform:scaleX(1.0811)">footprint 2</div>
<div class="t" style="left:1154.38px;top:481px;font-size:13.5px;color:#282828;transform:scaleX(0.9300)">1</div>
<div class="t" style="left:1179.75px;top:481px;font-size:13.5px;color:#282828;transform:scaleX(0.9300)">C1</div>
<div class="t" style="left:162.20px;top:516px;font-size:13.5px;color:#282828;transform:scaleX(1.0700)">4</div>
<div class="t" style="left:187.23px;top:516px;font-size:13.5px;color:#282828;transform:scaleX(0.9531)">Cap Ceramic 0201 X5R ...</div>
<div class="t" style="left:352.45px;top:516px;font-size:13.5px;color:#282828;transform:scaleX(0.9234)">CS-2484</div>
<div class="t" style="left:755.76px;top:516px;font-size:13.5px;color:#282828;transform:scaleX(0.9410)">UMK063BJ2...</div>
<div class="t" style="left:1154.60px;top:516px;font-size:13.5px;color:#282828;transform:scaleX(1.0700)">4</div>
<div class="t" style="left:1179.75px;top:516px;font-size:13.5px;color:#282828;transform:scaleX(0.9315)">C38 D2 T5 R2</div>
<div class="t" style="left:162.02px;top:551px;font-size:13.5px;color:#282828;transform:scaleX(1.0700)">5</div>
<div class="t" style="left:352.45px;top:551px;font-size:13.5px;color:#282828;transform:scaleX(0.9234)">CS-2484</div>
<div class="t" style="left:755.76px;top:551px;font-size:13.5px;color:#282828;transform:scaleX(0.9410)">UMK063BJ2...</div>
<div class="t" style="left:848.78px;top:551px;font-size:13.5px;color:#282828;transform:scaleX(1.0811)">footprint 2</div>
<div class="t" style="left:1154.62px;top:551px;font-size:13.5px;color:#282828;transform:scaleX(1.0700)">5</div>
<div class="t" style="left:1179.74px;top:551px;font-size:13.5px;color:#282828;transform:scaleX(0.9378)">C38 D2 T5 R2 T156</div>
<div class="t" style="left:162.22px;top:586px;font-size:13.5px;color:#282828;transform:scaleX(1.0700)">6</div>
<div class="t" style="left:187.23px;top:586px;font-size:13.5px;color:#282828;transform:scaleX(0.9531)">Cap Ceramic 0201 X5R ...</div>
<div class="t" style="left:352.45px;top:586px;font-size:13.5px;color:#282828;transform:scaleX(0.9269)">CS-2408</div>
<div class="t" style="left:755.76px;top:586px;font-size:13.5px;color:#282828;transform:scaleX(0.9410)">UMK063BJ2...</div>
<div class="t" style="left:848.78px;top:586px;font-size:13.5px;color:#282828;transform:scaleX(1.0811)">footprint 2</div>
<div class="t" style="left:1154.38px;top:586px;font-size:13.5px;color:#282828;transform:scaleX(0.9300)">1</div>
<div class="t" style="left:1179.75px;top:586px;font-size:13.5px;color:#282828;transform:scaleX(0.9357)">C100</div>
<div class="t" style="left:1126.34px;top:628px;font-size:13.5px;color:#333;transform:scaleX(0.9680)">Rows per Page:25</div>
<div class="t" style="left:1306.74px;top:623px;font-size:13.5px;color:#333;transform:scaleX(0.9643)">Page 1 of 1</div>
<div class="t" style="left:1306.49px;top:642px;font-size:12px;color:#3a3a3a;transform:scaleX(1.0114)">(6 Records)</div>
<div class="t" style="left:13.67px;top:701px;font-size:15px;color:#939393;transform:scaleX(1.0216)">BINNING</div>
<div class="t" style="left:13.78px;top:913px;font-size:15px;color:#939393;transform:scaleX(0.9351)">MATERIAL LOGISTICS</div>
<div class="t" style="left:1527.66px;top:188px;font-size:11px;color:#5e5e5e;transform:scaleX(0.9289)">DETAILS</div>
<div class="t" style="left:1527.68px;top:228px;font-size:11px;color:#5e5e5e;transform:scaleX(0.9117)">PARAMETERS</div>
<div class="t" style="left:1527.96px;top:260px;font-size:11px;color:#5e5e5e;transform:scaleX(0.8959)">CHARACTERISTICS</div>
<div class="t" style="left:1528.50px;top:276px;font-size:11px;color:#5e5e5e;transform:scaleX(0.9296)">AND RULES</div>
<div class="t" style="left:1527.68px;top:308px;font-size:11px;color:#5e5e5e;transform:scaleX(0.9114)">REPAIR POLICY</div>
<div class="t" style="left:1528.03px;top:348px;font-size:11px;color:#5e5e5e;transform:scaleX(0.9322)">SUB-PRODUCTS</div>
<div class="t" style="left:1527.92px;top:388px;font-size:11px;color:#1a73b8;transform:scaleX(0.9588)">COMPONENTS</div>
<div class="t" style="left:1527.57px;top:428px;font-size:11px;color:#5e5e5e;transform:scaleX(1.0317)">BINNING</div>
<div class="t" style="left:1527.66px;top:468px;font-size:11px;color:#5e5e5e;transform:scaleX(0.9299)">MATERIAL LOGISTICS</div>
<div class="t" style="left:1528.32px;top:500px;font-size:11px;color:#5e5e5e;transform:scaleX(0.8906)">TRANSFER</div>
<div class="t" style="left:1527.51px;top:516px;font-size:11px;color:#5e5e5e;transform:scaleX(0.9892)">INFORMATION</div>
<div class="t" style="left:1528.07px;top:540px;font-size:11px;color:#5e5e5e;transform:scaleX(0.8690)">SAFETY</div>
<div class="t" style="left:1527.51px;top:556px;font-size:11px;color:#5e5e5e;transform:scaleX(0.9892)">INFORMATION</div>
<div class="t" style="left:1527.93px;top:588px;font-size:11px;color:#5e5e5e;transform:scaleX(0.9425)">COSTING</div>
<div class="t" style="left:1527.60px;top:628px;font-size:11px;color:#5e5e5e;transform:scaleX(1.0000)">PLANNING</div>
<div class="t" style="left:1528.02px;top:668px;font-size:11px;color:#5e5e5e;transform:scaleX(0.9534)">SCHEDULING</div>
<div class="t" style="left:1528.50px;top:708px;font-size:11px;color:#5e5e5e;transform:scaleX(0.9341)">ATTACHMENTS</div>
<div class="t" style="left:1642.10px;top:13px;font-size:13px;color:#fff;transform:scaleX(0.9767)">A</div>
</body></html>
